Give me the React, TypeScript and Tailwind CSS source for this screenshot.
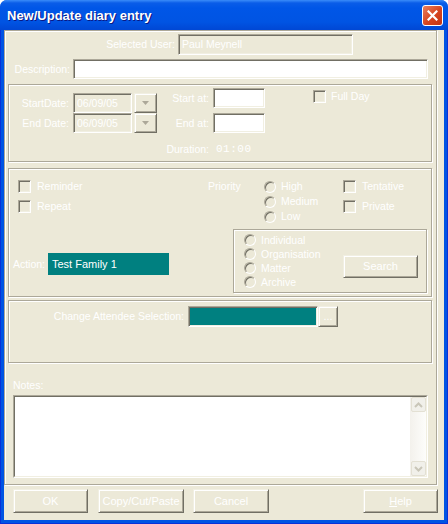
import React from "react";

const sunken =
  "border border-t-[#aca899] border-l-[#aca899] border-r-white border-b-white shadow-[inset_1px_1px_0_#716f64,inset_-1px_-1px_0_#f1efe2]";
const raised =
  "border border-t-[#f1efe2] border-l-[#f1efe2] border-r-[#716f64] border-b-[#716f64] shadow-[inset_1px_1px_0_#fff,inset_-1px_-1px_0_#aca899]";
const etched = "border border-[#aca899] shadow-[inset_1px_1px_0_#fff,1px_1px_0_#fff]";

function Check({ label }: { label: string }) {
  return (
    <div className="flex h-[13px] items-center">
      <div className={`h-[13px] w-[13px] shrink-0 bg-[#ece9d8] ${sunken}`} />
      <span className="ml-[6px]">{label}</span>
    </div>
  );
}

function Radio({ label, h = "h-[15px]" }: { label: string; h?: string }) {
  return (
    <div className={`flex ${h} items-center`}>
      <div className="h-[12px] w-[12px] shrink-0 rounded-full border border-t-[#aca899] border-l-[#aca899] border-r-white border-b-white bg-[#ece9d8] shadow-[inset_1px_1px_0_#716f64]" />
      <span className="ml-[5px]">{label}</span>
    </div>
  );
}

function DropBtn() {
  return (
    <div className={`ml-[2px] flex h-[20px] w-[23px] items-center justify-center bg-[#ece9d8] ${raised}`}>
      <svg width="7" height="4" viewBox="0 0 7 4">
        <path d="M0 0h7L3.5 4z" fill="#aca899" />
      </svg>
    </div>
  );
}

function Chevron({ up }: { up?: boolean }) {
  return (
    <div className="flex h-[15px] w-[15px] items-center justify-center rounded-[2px] border border-[#e3e0d3] bg-[#f1f0ea]">
      <svg width="9" height="6" viewBox="0 0 9 6">
        <path
          d={up ? "M1 5l3.5-3.5L8 5" : "M1 1l3.5 3.5L8 1"}
          fill="none"
          stroke="#c9c6b8"
          strokeWidth="2"
        />
      </svg>
    </div>
  );
}

export default function App() {
  return (
    <div className="h-[524px] w-[448px] bg-white font-['Liberation_Sans',Arial,sans-serif] text-[10.5px] leading-[13px] text-white select-none">
      <div className="flex h-full flex-col overflow-hidden rounded-t-[7px] bg-[#0054e3]">
        {/* title bar */}
        <div className="flex h-[30px] shrink-0 items-start bg-[linear-gradient(to_bottom,#3a8cf9_0px,#0a5de8_3px,#0056e7_8px,#0054e3_22px,#0047d4_30px)]">
          <span className="ml-[7px] mt-[8px] text-[13px] font-bold leading-[16px] [text-shadow:1px_1px_0_#0a1883]">
            New/Update diary entry
          </span>
          <div className="ml-auto mr-[5px] mt-[5px] flex h-[21px] w-[21px] items-center justify-center rounded-[3px] border border-white bg-[linear-gradient(135deg,#e9805f,#d6441f_55%,#c23414)]">
            <svg width="11" height="11" viewBox="0 0 11 11">
              <path d="M1.5 1.5l8 8M9.5 1.5l-8 8" stroke="#fff" strokeWidth="2.2" strokeLinecap="square" />
            </svg>
          </div>
        </div>

        {/* client */}
        <div className="flex flex-1 flex-col border-x border-b border-[#0831d9] px-[3px] pb-[3px]">
          <div className="flex flex-1 flex-col bg-[#ece9d8]">
            <div className={`flex h-[455px] w-[433px] flex-col ${etched}`}>
              {/* selected user */}
              <div className="mt-[3px] flex h-[21px] items-center">
                <span className="w-[170px] text-right">Selected User:</span>
                <div className={`ml-[3px] flex h-[21px] w-[175px] items-center bg-[#ece9d8] pl-[3px] ${sunken}`}>
                  Paul Meynell
                </div>
              </div>
              {/* description */}
              <div className="mt-[4px] flex h-[20px] items-center">
                <span className="w-[68px] pr-[3px] text-right">Description:</span>
                <div className={`h-[20px] w-[355px] bg-white ${sunken}`} />
              </div>

              {/* dates */}
              <div className={`ml-[3px] mt-[5px] flex h-[78px] w-[424px] flex-col ${etched}`}>
                <div className="flex items-start">
                  <div className="mt-[8px] flex flex-col">
                    {["StartDate:", "End Date:"].map((l) => (
                      <div key={l} className="flex h-[20px] items-center">
                        <span className="w-[64px] pr-[4px] text-right">{l}</span>
                        <div className={`flex h-[20px] w-[59px] items-center bg-[#ece9d8] pl-[3px] ${sunken}`}>
                          06/09/05
                        </div>
                        <DropBtn />
                      </div>
                    ))}
                  </div>
                  <div className="mt-[3px] flex flex-col">
                    <div className="flex h-[20px] items-center">
                      <span className="w-[56px] pr-[4px] text-right">Start at:</span>
                      <div className={`h-[20px] w-[52px] bg-white ${sunken}`} />
                    </div>
                    <div className="mt-[5px] flex h-[20px] items-center">
                      <span className="w-[56px] pr-[4px] text-right">End at:</span>
                      <div className={`h-[20px] w-[52px] bg-white ${sunken}`} />
                    </div>
                  </div>
                  <div className="ml-[48px] mt-[5px]">
                    <div className="flex h-[13px] items-center">
                      <div className={`h-[13px] w-[13px] shrink-0 bg-[#ece9d8] ${sunken}`} />
                      <span className="ml-[5px]">Full Day</span>
                    </div>
                  </div>
                </div>
                <div className="mt-[10px] flex h-[13px] items-center">
                  <span className="w-[204px] pr-[4px] text-right">Duration:</span>
                  <span className="ml-[3px] font-['Liberation_Mono',monospace] text-[11px] tracking-[0.5px]">01:00</span>
                </div>
              </div>

              {/* options */}
              <div className={`ml-[3px] mt-[6px] flex h-[129px] w-[424px] flex-col ${etched}`}>
                <div className="flex h-[60px] items-start">
                  <div className="mt-[11px] flex w-[199px] flex-col gap-[7px] pl-[9px]">
                    <Check label="Reminder" />
                    <Check label="Repeat" />
                  </div>
                  <span className="mt-[11px] w-[56px]">Priority</span>
                  <div className="mt-[10px] flex w-[79px] flex-col">
                    <Radio label="High" />
                    <Radio label="Medium" />
                    <Radio label="Low" />
                  </div>
                  <div className="mt-[11px] flex flex-col gap-[7px]">
                    <Check label="Tentative" />
                    <Check label="Private" />
                  </div>
                </div>
                <div className="flex items-start">
                  <div className="mt-[24px] flex h-[22px] w-[160px] items-center">
                    <span className="w-[39px] pr-[3px] text-right">Action:</span>
                    <div className="flex h-[22px] w-[121px] items-center bg-[#008080] pl-[4px] text-[11px]">
                      Test Family 1
                    </div>
                  </div>
                  <div className={`ml-[64px] flex h-[64px] w-[194px] items-start ${etched}`}>
                    <div className="ml-[10px] mt-[3px] flex flex-col">
                      <Radio label="Individual" h="h-[14px]" />
                      <Radio label="Organisation" h="h-[14px]" />
                      <Radio label="Matter" h="h-[14px]" />
                      <Radio label="Archive" h="h-[14px]" />
                    </div>
                    <div className={`ml-auto mr-[8px] mt-[25px] flex h-[23px] w-[75px] items-center justify-center bg-[#ece9d8] text-[11px] ${raised}`}>
                      Search
                    </div>
                  </div>
                </div>
              </div>

              {/* attendees */}
              <div className={`ml-[3px] mt-[3px] flex h-[63px] w-[424px] flex-col ${etched}`}>
                <div className="mt-[5px] flex h-[21px] items-center">
                  <span className="w-[179px] pr-[4px] text-right">Change Attendee Selection:</span>
                  <div className={`h-[21px] w-[130px] bg-[#008080] ${sunken}`} />
                  <div className={`flex h-[21px] w-[20px] items-center justify-center bg-[#ece9d8] ${raised}`}>
                    ...
                  </div>
                </div>
              </div>

              {/* notes */}
              <span className="ml-[8px] mt-[16px] h-[13px]">Notes:</span>
              <div className="ml-[8px] mt-[3px] flex h-[83px] w-[415px] border border-t-[#aca899] border-l-[#aca899] border-r-white border-b-white">
                <div className="flex flex-1 border border-t-[#716f64] border-l-[#716f64] border-r-[#f1efe2] border-b-[#f1efe2] bg-white">
                  <div className="flex-1" />
                  <div className="flex w-[16px] flex-col justify-between bg-[linear-gradient(to_right,#f3f1ec,#fdfdfb)] pl-[1px]">
                    <Chevron up />
                    <Chevron />
                  </div>
                </div>
              </div>
            </div>

            {/* buttons */}
            <div className="mt-[4px] flex h-[24px] text-[11px]">
              <div className={`ml-[9px] flex w-[75px] items-center justify-center bg-[#ece9d8] ${raised}`}>OK</div>
              <div className={`ml-[10px] flex w-[86px] items-center justify-center bg-[#ece9d8] ${raised}`}>
                Copy/Cut/Paste
              </div>
              <div className={`ml-[9px] flex w-[76px] items-center justify-center bg-[#ece9d8] ${raised}`}>Cancel</div>
              <div className={`ml-auto mr-[6px] flex w-[75px] items-center justify-center bg-[#ece9d8] ${raised}`}>
                <span>
                  <span className="underline">H</span>elp
                </span>
              </div>
            </div>
          </div>
        </div>
      </div>
    </div>
  );
}
